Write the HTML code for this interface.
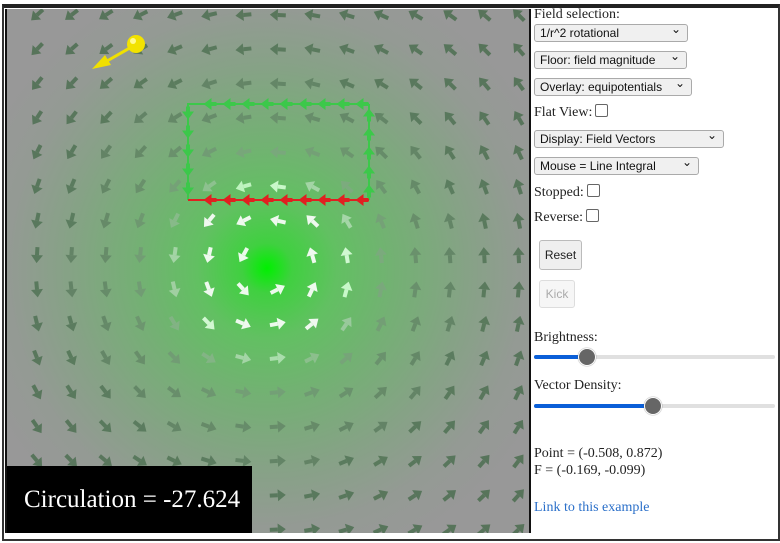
<!DOCTYPE html>
<html><head><style>
body{margin:0;width:780px;height:543px;background:#fff;position:relative;overflow:hidden;font-family:"Liberation Serif",serif;font-size:14px;color:#222}
.frame{position:absolute;left:2px;top:4px;width:774px;height:531px;border:2px solid #333;border-top:4px solid #222}
#cv{position:absolute;left:5px;top:9px;width:522px;height:524px;background:radial-gradient(circle at 260px 259px,#00f000 0px,#40d040 25px,#62c062 70px,#74b074 130px,#86a286 200px,#949a94 260px,#989898 310px);border-left:2px solid #111;border-right:2px solid #111;overflow:hidden}
.t{position:absolute;left:534px;white-space:nowrap}
.sel{position:absolute;left:534px;height:18px;border:1px solid #aaa;border-radius:3px;background:#f0f0f0;font-family:"Liberation Sans",sans-serif;font-size:12px;line-height:17px;padding-left:5px;box-sizing:border-box;color:#111}
.sel:after{content:"⌄";position:absolute;right:6px;top:-4px;font-size:12px}
.cb{display:inline-block;width:11px;height:11px;border:1px solid #666;border-radius:2px;vertical-align:-1px;margin-left:3px;background:#fff}
.btn{position:absolute;border:1px solid #bbb;border-radius:3px;background:#efefef;font-family:"Liberation Sans",sans-serif;font-size:12px;text-align:center}
.trk{position:absolute;left:534px;width:241px;height:4px;background:#e0e0e0;border-radius:2px}
.fill{position:absolute;left:0;top:0;height:4px;background:#0a5fd8;border-radius:2px}
.th{position:absolute;top:-7px;width:16px;height:16px;border-radius:50%;background:#666;border:1px solid #fff;box-shadow:0 0 1px #555}
</style></head><body>
<div class="frame"></div>
<div id="cv"><svg id="s" width="522" height="524" style="position:absolute;left:0;top:0"></svg>
<div style="position:absolute;left:0;top:457px;width:245px;height:67px;background:#000;color:#fff;font-size:25px;line-height:67px;padding-left:17px;box-sizing:border-box">Circulation = -27.624</div>
</div>
<div class="t" style="top:7px">Field selection:</div>
<div class="sel" style="top:24px;width:154px">1/r^2 rotational</div>
<div class="sel" style="top:51px;width:153px">Floor: field magnitude</div>
<div class="sel" style="top:78px;width:158px">Overlay: equipotentials</div>
<div class="t" style="top:104px">Flat View:<span class="cb"></span></div>
<div class="sel" style="top:130px;width:190px">Display: Field Vectors</div>
<div class="sel" style="top:157px;width:165px">Mouse = Line Integral</div>
<div class="t" style="top:184px">Stopped:<span class="cb"></span></div>
<div class="t" style="top:209px">Reverse:<span class="cb"></span></div>
<div class="btn" style="left:539px;top:240px;width:41px;height:28px;line-height:28px">Reset</div>
<div class="btn" style="left:539px;top:280px;width:34px;height:26px;line-height:26px;color:#aaa;background:#f6f6f6;border-color:#ddd">Kick</div>
<div class="t" style="top:330px">Brightness:</div>
<div class="trk" style="top:355px"><div class="fill" style="width:52px"></div><div class="th" style="left:44px"></div></div>
<div class="t" style="top:378px">Vector Density:</div>
<div class="trk" style="top:404px"><div class="fill" style="width:118px"></div><div class="th" style="left:110px"></div></div>
<div class="t" style="top:446px">Point = (-0.508, 0.872)</div>
<div class="t" style="top:463px">F = (-0.169, -0.099)</div>
<div class="t" style="top:500px;color:#2a6fc9">Link to this example</div>
<script>
var s=document.getElementById('s'),h='';
function arr(x,y,ang,col,L,op){var c=Math.cos(ang),n=Math.sin(ang);
var tx=x+c*L/2,ty=y+n*L/2,bx=x-c*L/2,by=y-n*L/2,hx=tx-c*8,hy=ty-n*8;
h+='<g opacity="'+(op||1)+'"><line x1="'+bx+'" y1="'+by+'" x2="'+hx+'" y2="'+hy+'" stroke="'+col+'" stroke-width="4"/>';
h+='<polygon points="'+tx+','+ty+' '+(hx-n*6)+','+(hy+c*6)+' '+(hx+n*6)+','+(hy-c*6)+'" fill="'+col+'"/></g>';}
var cx=260,cy=259;
for(var i=0;i<16;i++)for(var j=0;j<16;j++){var x=30+i*34.4,y=6+j*34.3;var dx=x-cx,dy=y-cy,r=Math.sqrt(dx*dx+dy*dy);if(r<20)continue;
var a=Math.atan2(-dx,dy);var k=Math.min(1,Math.pow(75/r,3));
var R=Math.round(78+177*k),G=Math.round(110+145*Math.min(1,k*1.4)),B=Math.round(82+173*k);
var op=(r>100&&r<200)?0.75:0.9;
arr(x,y,a,'rgb('+R+','+G+','+B+')',16,op);}
// loop
h+='<path d="M362 95 H181 V191 M362 191 V95" stroke="#3cc84a" stroke-width="2" fill="none"/><line x1="362" y1="191" x2="181" y2="191" stroke="#e02020" stroke-width="2"/>';
for(var x=355;x>=185;x-=19)arr(x,95,Math.PI,'#3cc84a',13);
for(var y=104;y<=188;y+=19)arr(181,y,Math.PI/2,'#3cc84a',13);
for(var y=182;y>=98;y-=19)arr(362,y,-Math.PI/2,'#3cc84a',13);
for(var x=355;x>=185;x-=19)arr(x,191,Math.PI,'#e02020',13);
// ball
h+='<line x1="128" y1="36" x2="100" y2="52" stroke="#f0e000" stroke-width="3"/><polygon points="85,60 98,46 104,56" fill="#f0e000"/><circle cx="129" cy="35" r="9" fill="#f2e200"/><circle cx="126" cy="32" r="3" fill="#fffa90"/>';
s.innerHTML=h;
</script>
</body></html>
